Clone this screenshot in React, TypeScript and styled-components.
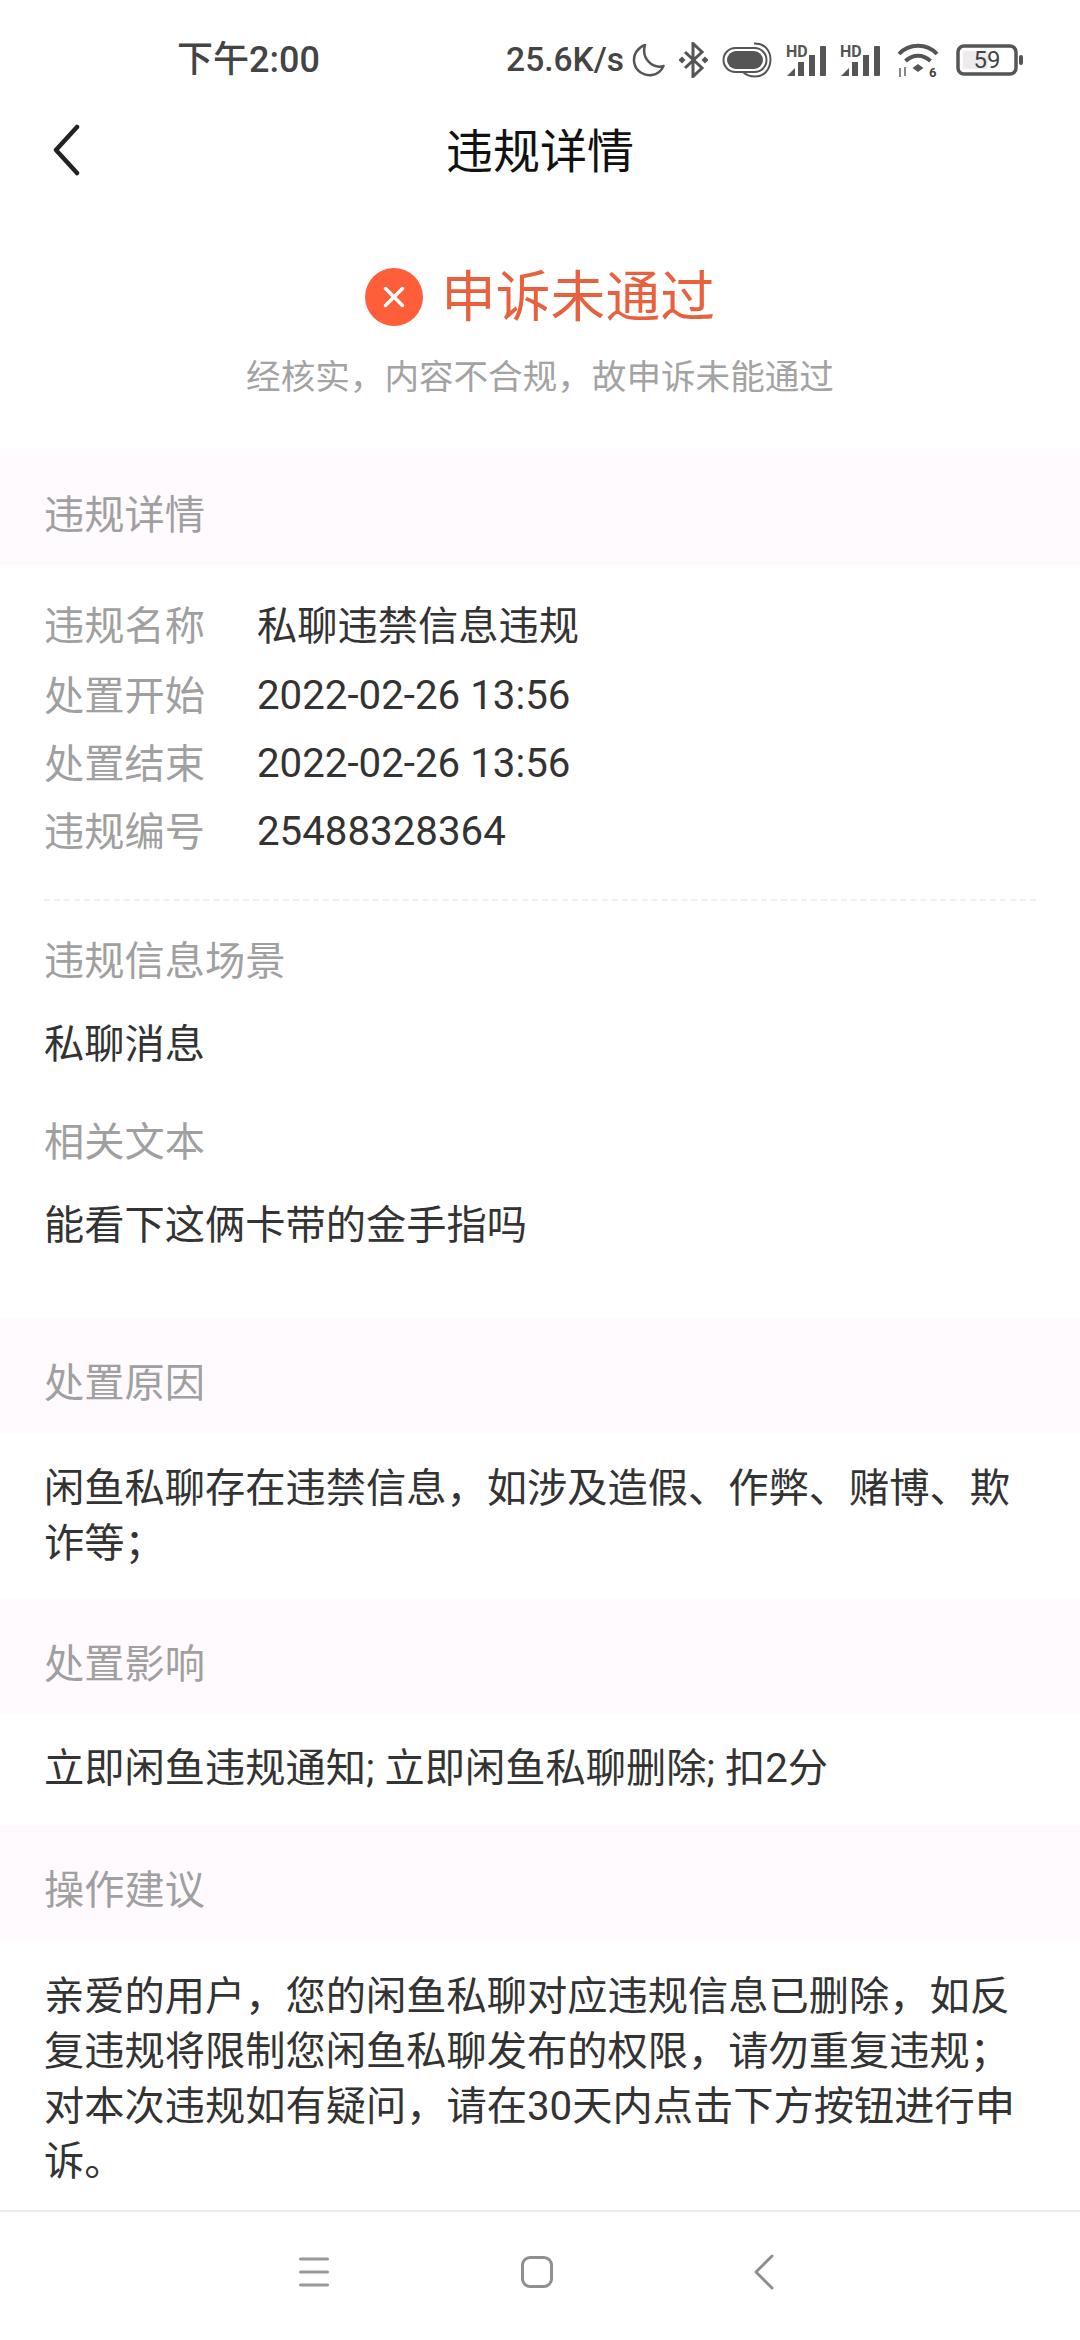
import React from 'react';
import styled, { createGlobalStyle } from 'styled-components';

const Global = createGlobalStyle`
  html, body { margin: 0; padding: 0; background: #fff; }
  body { font-family: Roboto, "Noto Sans CJK SC", sans-serif; }
`;

const Page = styled.div`
  width: 1080px;
  height: 2340px;
  display: flex;
  flex-direction: column;
  overflow: hidden;
  background: #fff;
  color: #333;
`;

const StatusBar = styled.div`
  height: 120px;
  flex: none;
  display: flex;
  align-items: center;
  padding: 0 57px 0 177px;
  box-sizing: border-box;
  color: #444;
`;
const Time = styled.div`
  font-size: 36px;
  font-weight: 500;
  line-height: 44px;
`;
const StatusRight = styled.div`
  margin-left: auto;
  display: flex;
  align-items: center;
  gap: 14px;
`;
const SpeedGroup = styled.div`
  display: flex;
  align-items: center;
  gap: 5px;
`;
const SignalPair = styled.div`
  display: flex;
  align-items: center;
  gap: 12px;
`;
const Speed = styled.div`
  flex: none;
  white-space: nowrap;
  padding-right: 3px;
  font-size: 33.5px;
  font-weight: 500;
  line-height: 44px;
`;

const NavBar = styled.div`
  height: 64px;
  flex: none;
  display: flex;
  align-items: center;
  justify-content: center;
  position: relative;
`;
const BackButton = styled.div`
  position: absolute;
  left: 51px;
  top: 4px;
  display: flex;
`;
const NavTitle = styled.div`
  font-size: 47px;
  line-height: 64px;
  color: #111;
`;

const StatusBlock = styled.div`
  flex: none;
  height: 266px;
  box-sizing: border-box;
  padding-top: 80px;
  display: flex;
  flex-direction: column;
  align-items: center;
`;
const StatusLine = styled.div`
  display: flex;
  align-items: center;
  gap: 18px;
  height: 66px;
`;
const StatusText = styled.div`
  font-size: 54.8px;
  line-height: 66px;
  color: #e8613f;
`;
const StatusSub = styled.div`
  margin-top: 25px;
  font-size: 34.6px;
  line-height: 44px;
  color: #a3a3a3;
`;

const SectionHead = styled.div<{ $gap?: number }>`
  flex: none;
  height: 115px;
  box-sizing: border-box;
  display: flex;
  align-items: center;
  padding: 8px 44px 0;
  margin-top: ${(p) => p.$gap || 0}px;
  background: #fefafe;
  font-size: 40.25px;
  color: #a0a0a0;
`;

const Rows = styled.div`
  flex: none;
  padding: 28px 44px 0;
`;
const Row = styled.div<{ $lift?: boolean }>`
  display: flex;
  height: 68px;
  box-sizing: border-box;
  padding-bottom: ${(p) => (p.$lift ? 4 : 0)}px;
  align-items: center;
  font-size: 40.25px;
`;
const RowLabel = styled.div`
  width: 213px;
  padding-bottom: 6px;
  color: #a0a0a0;
`;
const RowValue = styled.div<{ $cjk?: boolean }>`
  color: #333;
  padding-bottom: ${(p) => (p.$cjk ? 6 : 0)}px;
`;
const Dash = styled.div`
  margin: 34px 0 0;
  height: 0;
  border-top: 2px dashed #f0f0f0;
`;
const Field = styled.div<{ $muted?: boolean; $gap: number }>`
  display: flex;
  align-items: center;
  height: 68px;
  font-size: 40.25px;
  color: ${(p) => (p.$muted ? '#a0a0a0' : '#333')};
  margin-top: ${(p) => p.$gap}px;
`;
const Para = styled.div<{ $top: number; $bottom: number }>`
  flex: none;
  padding: ${(p) => p.$top}px 44px ${(p) => p.$bottom}px;
  font-size: 40.25px;
  line-height: 55px;
  color: #333;
`;
const Spacer = styled.div`
  flex: 1;
`;
const BottomBar = styled.div`
  flex: none;
  height: 130px;
  border-top: 2px solid #ececec;
  box-sizing: border-box;
  display: flex;
  align-items: center;
  padding: 0 0 8px 299px;
  gap: 192px;
`;
const BackSlot = styled.div`
  display: flex;
  margin-left: 9px;
`;

const Moon = () => (
  <svg width="33" height="34" viewBox="0 0 33 34" fill="none" stroke="#555" strokeWidth="2.500">
    <path d="M13 2 C4 5.500 1 13 2.300 20 C4 29 13 33 20 32 C25 31.500 29 28.500 31.500 23 C21 26 9 16 13 2Z" strokeLinejoin="round" />
  </svg>
);
const Bluetooth = () => (
  <svg width="29" height="36" viewBox="0 0 29 36" fill="none">
    <path d="M6 10 L23 26 L14 34.500 V1.500 L23 10 L6 26" stroke="#555" strokeWidth="3" />
    <rect x="0.500" y="15.500" width="5" height="5" transform="rotate(45 3 18)" fill="#555" />
    <rect x="23.500" y="15.500" width="5" height="5" transform="rotate(45 26 18)" fill="#555" />
  </svg>
);
const Pill = () => (
  <svg width="50" height="36" viewBox="0 0 50 36" fill="none">
    <rect x="1.500" y="6" width="43" height="24" rx="12" stroke="#555" strokeWidth="2" />
    <rect x="5" y="9" width="36" height="18" rx="9" fill="#555" />
    <path d="M32 1.500 C43 1 48.500 9 48.500 18 C48 28 42 34.500 33 34.500 C28 34.500 24 33 21 30" stroke="#555" strokeWidth="2" />
  </svg>
);
const Signal = () => (
  <svg width="42" height="34" viewBox="0 0 42 34">
    <text x="0" y="14" fontFamily="Roboto, sans-serif" fontWeight="700" fontSize="16" fill="#555">HD</text>
    <path d="M1 33 L9 25 V33Z" fill="#555" />
    <rect x="12" y="19" width="6" height="14" fill="#555" />
    <rect x="23" y="12" width="6" height="21" fill="#555" />
    <rect x="34" y="3" width="6" height="30" rx="1" fill="#555" />
  </svg>
);
const Wifi = () => (
  <svg width="44" height="36" viewBox="0 0 44 36" fill="none">
    <path d="M3 12 C13 1 31 1 41 12" stroke="#555" strokeWidth="4" />
    <path d="M9.500 19 C17 12 27 12 34.500 19" stroke="#555" strokeWidth="4" />
    <path d="M16.500 26 L22 22 L27.500 26 L22 30Z" fill="#555" />
    <path d="M4 26 V35 M9 25 V34" stroke="#888" strokeWidth="2" />
    <text x="33" y="35" fontFamily="Roboto, sans-serif" fontWeight="700" fontSize="13" fill="#444">6</text>
  </svg>
);
const BatteryWrap = styled.div`
  position: relative;
  display: flex;
`;
const BatteryLabel = styled.div`
  position: absolute;
  left: 2px;
  width: 62px;
  top: 0;
  height: 32px;
  display: flex;
  align-items: center;
  justify-content: center;
  font-size: 24px;
  font-weight: 400;
  color: #444;
`;
const Battery = () => (
  <BatteryWrap>
    <svg width="69" height="32" viewBox="0 0 69 32" fill="none">
      <rect x="4" y="2" width="58" height="28" rx="6" stroke="#555" strokeWidth="3.500" />
      <rect x="9" y="7" width="25" height="18" rx="2" fill="#eeebee" />
      <rect x="65" y="11" width="4" height="10" rx="2" fill="#555" />
    </svg>
    <BatteryLabel>59</BatteryLabel>
  </BatteryWrap>
);

const Chevron = () => (
  <svg width="32" height="52" viewBox="0 0 32 52" fill="none">
    <path d="M26 3 L5 26 L26 49" stroke="#222" strokeWidth="4.500" strokeLinecap="round" strokeLinejoin="round" />
  </svg>
);
const Fail = () => (
  <svg width="58" height="58" viewBox="0 0 58 58">
    <circle cx="29" cy="29" r="29" fill="#ff5e3a" />
    <path d="M20.500 20.500 L37.500 37.500 M37.500 20.500 L20.500 37.500" stroke="#fff" strokeWidth="3.500" strokeLinecap="round" />
  </svg>
);
const Menu = () => (
  <svg width="30" height="30" viewBox="0 0 30 30" stroke="#999" strokeWidth="3" strokeLinecap="round">
    <path d="M1.500 2 H28.500 M1.500 15 H28.500 M1.500 28 H28.500" />
  </svg>
);
const Home = () => (
  <svg width="32" height="32" viewBox="0 0 32 32" fill="none">
    <rect x="1.500" y="1.500" width="29" height="29" rx="7.500" stroke="#8f8f8f" strokeWidth="3" />
  </svg>
);
const Back = () => (
  <svg width="20" height="36" viewBox="0 0 20 36" fill="none">
    <path d="M18 2 L2 18 L18 34" stroke="#8f8f8f" strokeWidth="3" strokeLinecap="round" strokeLinejoin="round" />
  </svg>
);

export default function App() {
  return (
    <Page>
      <Global />
      <StatusBar>
        <Time>下午2:00</Time>
        <StatusRight>
          <SpeedGroup>
            <Speed>25.6K/s</Speed>
            <Moon />
          </SpeedGroup>
          <Bluetooth />
          <Pill />
          <SignalPair>
            <Signal />
            <Signal />
          </SignalPair>
          <Wifi />
          <Battery />
        </StatusRight>
      </StatusBar>
      <NavBar>
        <BackButton><Chevron /></BackButton>
        <NavTitle>违规详情</NavTitle>
      </NavBar>
      <StatusBlock>
        <StatusLine>
          <Fail />
          <StatusText>申诉未通过</StatusText>
        </StatusLine>
        <StatusSub>经核实，内容不合规，故申诉未能通过</StatusSub>
      </StatusBlock>
      <SectionHead>违规详情</SectionHead>
      <Rows>
        <Row $lift><RowLabel>违规名称</RowLabel><RowValue $cjk>私聊违禁信息违规</RowValue></Row>
        <Row><RowLabel>处置开始</RowLabel><RowValue>2022-02-26 13:56</RowValue></Row>
        <Row><RowLabel>处置结束</RowLabel><RowValue>2022-02-26 13:56</RowValue></Row>
        <Row><RowLabel>违规编号</RowLabel><RowValue>25488328364</RowValue></Row>
        <Dash />
        <Field $muted $gap={22}>违规信息场景</Field>
        <Field $gap={15}>私聊消息</Field>
        <Field $muted $gap={30}>相关文本</Field>
        <Field $gap={15}>能看下这俩卡带的金手指吗</Field>
      </Rows>
      <SectionHead $gap={63}>处置原因</SectionHead>
      <Para $top={28} $bottom={28}>闲鱼私聊存在违禁信息，如涉及造假、作弊、赌博、欺诈等；</Para>
      <SectionHead>处置影响</SectionHead>
      <Para $top={27} $bottom={29}>立即闲鱼违规通知; 立即闲鱼私聊删除; 扣2分</Para>
      <SectionHead>操作建议</SectionHead>
      <Para $top={29} $bottom={0}>亲爱的用户，您的闲鱼私聊对应违规信息已删除，如反复违规将限制您闲鱼私聊发布的权限，请勿重复违规；对本次违规如有疑问，请在30天内点击下方按钮进行申诉。</Para>
      <Spacer />
      <BottomBar>
        <Menu />
        <Home />
        <BackSlot><Back /></BackSlot>
      </BottomBar>
    </Page>
  );
}
